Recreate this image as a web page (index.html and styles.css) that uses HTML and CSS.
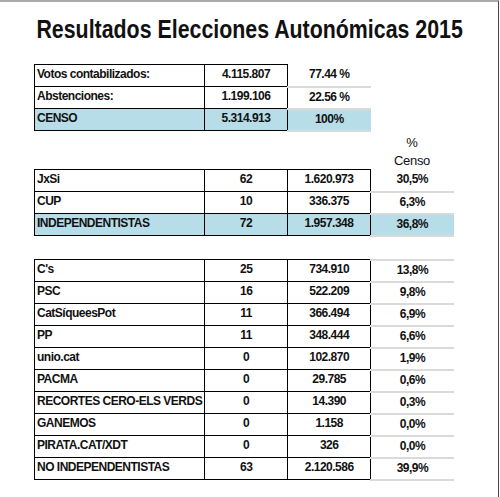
FILE: index.html
```html
<!DOCTYPE html>
<html lang="es">
<head>
  <meta charset="UTF-8">
  <title>Resultados Elecciones Autonómicas 2015</title>
  <link rel="stylesheet" href="styles.css">
</head>
<body>
<div class="page">
  <h1><span class="title-text">Resultados Elecciones Autonómicas 2015</span></h1>

  <table class="results summary">
    <tr>
      <td class="name">Votos contabilizados:</td>
      <td class="num">4.115.807</td>
      <td class="pct">77.44 %</td>
    </tr>
    <tr>
      <td class="name">Abstenciones:</td>
      <td class="num">1.199.106</td>
      <td class="pct">22.56 %</td>
    </tr>
    <tr class="total">
      <td class="name">CENSO</td>
      <td class="num">5.314.913</td>
      <td class="pct">100%</td>
    </tr>
  </table>

  <table class="results">
    <tr class="head">
      <td class="blank"></td>
      <td class="blank"></td>
      <td class="blank"></td>
      <td class="censo">%<br>Censo</td>
    </tr>
    <tr>
      <td class="name">JxSi</td>
      <td class="num">62</td>
      <td class="num">1.620.973</td>
      <td class="pct">30,5%</td>
    </tr>
    <tr>
      <td class="name">CUP</td>
      <td class="num">10</td>
      <td class="num">336.375</td>
      <td class="pct">6,3%</td>
    </tr>
    <tr class="total">
      <td class="name">INDEPENDENTISTAS</td>
      <td class="num">72</td>
      <td class="num">1.957.348</td>
      <td class="pct">36,8%</td>
    </tr>
  </table>

  <table class="results others">
    <tr><td class="name">C's</td><td class="num">25</td><td class="num">734.910</td><td class="pct">13,8%</td></tr>
    <tr><td class="name">PSC</td><td class="num">16</td><td class="num">522.209</td><td class="pct">9,8%</td></tr>
    <tr><td class="name">CatSíqueesPot</td><td class="num">11</td><td class="num">366.494</td><td class="pct">6,9%</td></tr>
    <tr><td class="name">PP</td><td class="num">11</td><td class="num">348.444</td><td class="pct">6,6%</td></tr>
    <tr><td class="name">unio.cat</td><td class="num">0</td><td class="num">102.870</td><td class="pct">1,9%</td></tr>
    <tr><td class="name">PACMA</td><td class="num">0</td><td class="num">29.785</td><td class="pct">0,6%</td></tr>
    <tr><td class="name">RECORTES CERO-ELS VERDS</td><td class="num">0</td><td class="num">14.390</td><td class="pct">0,3%</td></tr>
    <tr><td class="name">GANEMOS</td><td class="num">0</td><td class="num">1.158</td><td class="pct">0,0%</td></tr>
    <tr><td class="name">PIRATA.CAT/XDT</td><td class="num">0</td><td class="num">326</td><td class="pct">0,0%</td></tr>
    <tr><td class="name">NO INDEPENDENTISTAS</td><td class="num">63</td><td class="num">2.120.586</td><td class="pct">39,9%</td></tr>
  </table>
</div>
</body>
</html>
```

FILE: styles.css
```css
body {
  margin: 0;
  background-color: #fff;
  color: #111;
  font-family: "Liberation Sans", Arial, sans-serif;
}

.page {
  box-sizing: border-box;
  width: 499px;
  height: 497px;
  border-top: 2px solid #a9a9a9;
  border-right: 1px solid #444;
  padding-left: 34px;
}

h1 {
  margin: 12px 0 0 -34px;
  font-size: 25px;
  line-height: 30px;
  font-weight: bold;
  text-align: center;
  white-space: nowrap;
}

/* the original heading is set in a condensed face */
.title-text {
  display: inline-block;
  transform: scaleX(0.854);
}

.results {
  border-collapse: collapse;
  table-layout: fixed;
  font-size: 12px;
  letter-spacing: -0.5px;
  font-weight: bold;
}

.summary {
  margin-top: 20px;
}

.others {
  margin-top: 22px;
}

.results td {
  height: 22px;
  padding: 2px 2px 0;
  vertical-align: top;
  line-height: 14px;
  box-sizing: border-box;
  white-space: nowrap;
}

.name {
  width: 170px;
  border: 1px solid #000;
  text-align: left;
}

.num {
  width: 83px;
  border: 1px solid #000;
  text-align: center;
}

.pct {
  width: 83px;
  text-align: center;
  border-bottom: 2px solid #dadada;
}

.others tr:first-child .pct {
  border-top: 2px solid #dadada;
}

.total td {
  background-color: #b7dde8;
}

.results .head td {
  height: 38px;
  padding: 0;
}

.results .head .censo {
  padding-top: 2px;
  font-weight: normal;
  font-size: 13px;
  letter-spacing: -0.3px;
  line-height: 18px;
  text-align: center;
}
```
